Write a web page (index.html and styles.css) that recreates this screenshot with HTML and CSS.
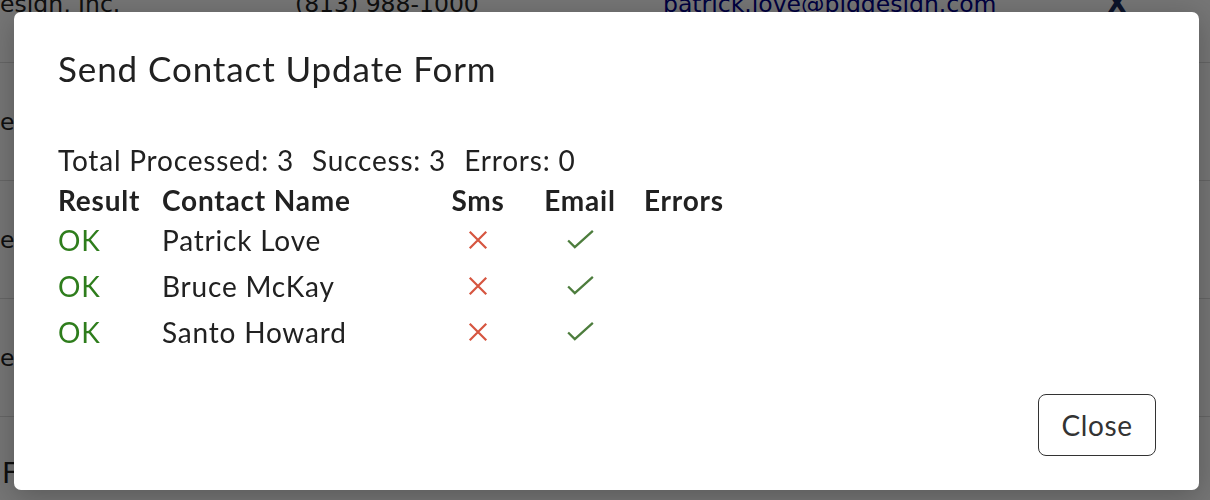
FILE: index.html
```html
<!DOCTYPE html>
<html lang="en">
<head>
  <meta charset="UTF-8"/>
  <title>Contacts</title>
  <link rel="stylesheet" href="styles.css">
</head>
<body>

  <div class="page">
    <div class="row">
      <div class="cell name">Design, Inc.</div>
      <div class="cell phone">(813) 988-1000</div>
      <div class="cell email">patrick.love@bigdesign.com</div>
      <div class="cell remove">X</div>
    </div>
    <div class="row">
      <div class="cell name">Design, Inc.</div>
      <div class="cell phone">(813) 988-1000</div>
      <div class="cell email">bruce.mckay@bigdesign.com</div>
      <div class="cell remove">X</div>
    </div>
    <div class="row">
      <div class="cell name">Design, Inc.</div>
      <div class="cell phone">(813) 988-1000</div>
      <div class="cell email">santo.howard@bigdesign.com</div>
      <div class="cell remove">X</div>
    </div>
    <div class="row">
      <div class="cell name">Design, Inc.</div>
      <div class="cell phone">(813) 988-1000</div>
      <div class="cell email">info@bigdesign.com</div>
      <div class="cell remove">X</div>
    </div>
    <div class="footer">Footer</div>
  </div>

  <div class="backdrop"></div>

  <div class="modal">
    <div class="modal-content">
      <h2 class="modal-title">Send Contact Update Form</h2>

      <div class="modal-body">
        <div class="summary">
          <span>Total Processed: 3</span>
          <span>Success: 3</span>
          <span>Errors: 0</span>
        </div>

        <div class="results">
          <div class="head">Result</div>
          <div class="head">Contact Name</div>
          <div class="head center">Sms</div>
          <div class="head center">Email</div>
          <div class="head">Errors</div>

          <div class="ok">OK</div>
          <div>Patrick Love</div>
          <div class="center"><svg class="icon" viewBox="0 0 24 24"><path class="cross" d="M3 3L21 21M21 3L3 21"/></svg></div>
          <div class="center"><svg class="icon check-icon" viewBox="0 0 28 20"><path class="check" d="M1 11L8 18L27 1"/></svg></div>
          <div></div>

          <div class="ok">OK</div>
          <div>Bruce McKay</div>
          <div class="center"><svg class="icon" viewBox="0 0 24 24"><path class="cross" d="M3 3L21 21M21 3L3 21"/></svg></div>
          <div class="center"><svg class="icon check-icon" viewBox="0 0 28 20"><path class="check" d="M1 11L8 18L27 1"/></svg></div>
          <div></div>

          <div class="ok">OK</div>
          <div>Santo Howard</div>
          <div class="center"><svg class="icon" viewBox="0 0 24 24"><path class="cross" d="M3 3L21 21M21 3L3 21"/></svg></div>
          <div class="center"><svg class="icon check-icon" viewBox="0 0 28 20"><path class="check" d="M1 11L8 18L27 1"/></svg></div>
          <div></div>
        </div>
      </div>

      <div class="modal-footer">
        <button class="btn-close">Close</button>
      </div>
    </div>
  </div>

</body>
</html>
```

FILE: styles.css
```css
body {
  margin: 0;
  padding: 0;
  font-family: 'DejaVu Sans', sans-serif;
  background: #fff;
  color: #222;
  overflow: hidden;
  height: 500px;
}

/* page underneath the dialog */
.page {
  margin-top: -55px;
  margin-left: -18px;
}

.row {
  display: grid;
  grid-template-columns: 313px 368px 444px 120px;
  height: 117px;
  align-items: center;
  border-bottom: 1px solid #dcdcdc;
  font-size: 23.5px;
}

.row .email {
  color: #00008b;
  white-space: nowrap;
  overflow: hidden;
}

.row .remove {
  color: #1a2a5a;
  font-weight: bold;
  font-size: 26px;
}

.footer {
  padding: 40px 20px 0;
  font-size: 28px;
  line-height: 34px;
}

/* Modal Styles */
.backdrop {
  position: fixed;
  inset: 0;
  background: rgba(0, 0, 0, 0.54);
}

.modal {
  position: fixed;
  top: 12px;
  left: 14px;
  width: 1185px;
  height: 478px;
}

.modal-content {
  height: 100%;
  box-sizing: border-box;
  background: #fff;
  border-radius: 7px;
  box-shadow: 0 6px 30px rgba(0, 0, 0, 0.25);
  font-family: 'Lato', sans-serif;
  color: #212121;
  display: flex;
  flex-direction: column;
  padding: 0 43px 34px 44px;
}

.modal-title {
  margin: 0;
  padding-top: 35px;
  font-size: 35px;
  font-weight: 400;
  line-height: 42px;
  letter-spacing: 0.9px;
}

.modal-body {
  flex: 1;
  padding-top: 51px;
  font-size: 28px;
  line-height: 40px;
  letter-spacing: 0.8px;
}

.summary {
  display: flex;
  gap: 18px;
}

.results {
  display: grid;
  grid-template-columns: 104px 278px 76px 128px auto;
  align-items: center;
}

.results .head {
  font-weight: 700;
}

.results > div:not(.head) {
  height: 46px;
  box-sizing: border-box;
  padding-bottom: 7px;
  display: flex;
  align-items: center;
}

.results > .center {
  justify-content: center;
  text-align: center;
}

.ok {
  color: #2e7d1c;
}

.icon {
  width: 22px;
  height: 22px;
}

.check-icon {
  width: 27px;
  height: 19px;
}

.cross {
  fill: none;
  stroke: #d6553f;
  stroke-width: 2.4;
}

.check {
  fill: none;
  stroke: #4d7d3d;
  stroke-width: 2.4;
}

.modal-footer {
  display: flex;
  justify-content: flex-end;
}

.btn-close {
  width: 118px;
  height: 62px;
  background: #fff;
  border: 1px solid #333;
  border-radius: 8px;
  font-family: 'Lato', sans-serif;
  font-size: 28px;
  letter-spacing: 0.6px;
  color: #333;
  cursor: pointer;
}
```
